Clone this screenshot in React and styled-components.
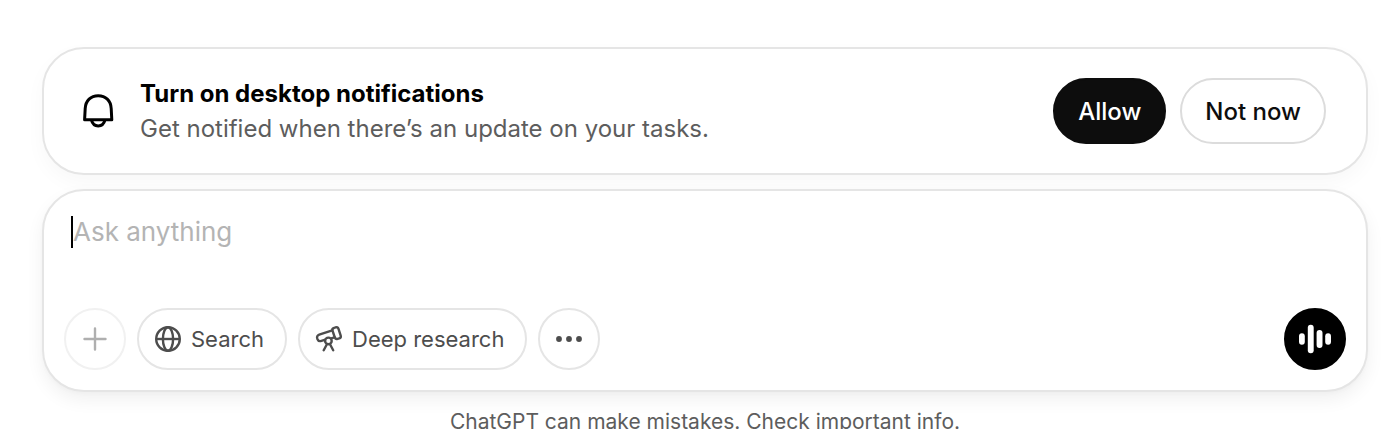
import React, { useState } from "react";
import styled, { createGlobalStyle } from "styled-components";

export default function App() {
  const [prompt, setPrompt] = useState("");

  return (
    <Page>
      <GlobalStyle />
      <Notice>
        <BellIcon />
        <NoticeText>
          <Title>Turn on desktop notifications</Title>
          <Subtitle>Get notified when there’s an update on your tasks.</Subtitle>
        </NoticeText>
        <Actions>
          <ActionButton $primary>Allow</ActionButton>
          <ActionButton>Not now</ActionButton>
        </Actions>
      </Notice>
      <Composer onSubmit={(e) => e.preventDefault()}>
        <Field>
          <Caret />
          <Prompt
            aria-label="Ask anything"
            placeholder="Ask anything"
            rows={1}
            value={prompt}
            onChange={(e) => setPrompt(e.target.value)}
          />
        </Field>
        <Toolbar>
          <RoundButton type="button" aria-label="Add files" $faded>
            <PlusIcon />
          </RoundButton>
          <PillButton type="button">
            <GlobeIcon />
            Search
          </PillButton>
          <PillButton type="button">
            <TelescopeIcon />
            Deep research
          </PillButton>
          <RoundButton type="button" aria-label="More tools">
            <DotsIcon />
          </RoundButton>
          <VoiceButton type="button" aria-label="Use voice mode">
            <VoiceIcon />
          </VoiceButton>
        </Toolbar>
      </Composer>
      <Disclaimer>ChatGPT can make mistakes. Check important info.</Disclaimer>
    </Page>
  );
}

function BellIcon() {
  return (
    <svg width="32" height="36" viewBox="0 0 32 36" fill="none" stroke="#000" strokeWidth="3" strokeLinejoin="round">
      <path d="M2.600 26.800 3.200 15.500C3.600 7.400 8.800 2.700 16.200 2.700s12.600 4.700 13 12.800l.6 11.300Z" />
      <path d="M9.500 27.200c.9 3.700 3.300 5.700 6.700 5.700s5.800-2 6.700-5.700" />
    </svg>
  );
}

function PlusIcon() {
  return (
    <svg width="26" height="26" viewBox="0 0 26 26" fill="none" stroke="#afafaf" strokeWidth="2.4" strokeLinecap="round">
      <path d="M13 2.500v21M2.500 13h21" />
    </svg>
  );
}

function GlobeIcon() {
  return (
    <svg width="28" height="28" viewBox="0 0 28 28" fill="none" stroke="#4d4d4d" strokeWidth="2.4">
      <circle cx="14" cy="14" r="11.800" />
      <ellipse cx="14" cy="14" rx="5.100" ry="11.800" />
      <path d="M2.200 14h23.600" />
    </svg>
  );
}

function TelescopeIcon() {
  return (
    <svg width="28" height="28" viewBox="0 0 28 28" fill="none" stroke="#4d4d4d" strokeWidth="2.4" strokeLinecap="round" strokeLinejoin="round">
      <path d="M18.900 3 20.500 2.400c1.400-.5 2.500 0 3 1.400l2.200 6.800c.4 1.400-.1 2.400-1.400 2.800l-1.700.5c-1.300.4-2.300-.1-2.800-1.400l-2.300-6.800c-.4-1.300.1-2.300 1.400-2.700Z" />
      <path d="M17.300 5.400 4.200 9.700c-1.900.7-2.600 2.100-1.900 3.900l.2.600c.7 1.700 2.100 2.300 3.900 1.700l3.200-1.100M19.800 12.400l-3 .8" />
      <circle cx="13.400" cy="15.900" r="3.300" />
      <path d="m11.900 19.200-3.200 6M15 19.200l3.200 6" />
    </svg>
  );
}

function DotsIcon() {
  return (
    <svg width="28" height="28" viewBox="0 0 28 28" fill="#4d4d4d">
      <circle cx="4" cy="14" r="2.900" />
      <circle cx="14" cy="14" r="2.900" />
      <circle cx="24" cy="14" r="2.900" />
    </svg>
  );
}

function VoiceIcon() {
  return (
    <svg width="32" height="32" viewBox="0 0 32 32" fill="#fff">
      <rect x="0" y="10.300" width="5.800" height="11.400" rx="2.900" />
      <rect x="8.800" y="1.800" width="5.900" height="28.400" rx="2.900" />
      <rect x="17.600" y="7" width="5.900" height="18" rx="2.900" />
      <rect x="26.200" y="10.300" width="5.800" height="11.400" rx="2.900" />
    </svg>
  );
}

const GlobalStyle = createGlobalStyle`
  * {
    box-sizing: border-box;
  }
  body {
    margin: 0;
    background: #fff;
  }
  body, button, textarea {
    font-family: Inter, "Liberation Sans", sans-serif;
  }
`;

const Page = styled.main`
  display: flex;
  flex-direction: column;
  gap: 14px;
  height: 100vh;
  padding: 47px 32px 0 42px;
  overflow: hidden;
`;

const Notice = styled.section`
  display: flex;
  flex-shrink: 0;
  align-items: center;
  gap: 26px;
  padding: 27px 40px 27px 38px;
  border: 2px solid #e5e5e5;
  border-radius: 42px;
  background: #fff;
  box-shadow: 0 8px 20px rgba(0, 0, 0, 0.03);
`;

const NoticeText = styled.div`
  flex: 1;
`;

const Title = styled.h2`
  margin: 0;
  font-size: 24px;
  font-weight: 700;
  line-height: 35px;
  color: #000;
`;

const Subtitle = styled.p`
  margin: 0;
  font-size: 24px;
  line-height: 35px;
  color: #5d5d5d;
`;

const Actions = styled.div`
  display: flex;
  gap: 14px;
`;

const ActionButton = styled.button`
  height: 66px;
  padding: 0 23px;
  border: 2px solid ${(props) => (props.$primary ? "#0d0d0d" : "#dcdcdc")};
  border-radius: 33px;
  background: ${(props) => (props.$primary ? "#0d0d0d" : "#fff")};
  color: ${(props) => (props.$primary ? "#fff" : "#0d0d0d")};
  font-size: 24px;
  font-weight: 500;
  cursor: pointer;
`;

const Composer = styled.form`
  flex-shrink: 0;
  padding: 25px 20px 20px;
  border: 2px solid #e5e5e5;
  border-radius: 42px;
  background: #fff;
  box-shadow: 0 8px 18px rgba(0, 0, 0, 0.06), 0 2px 4px rgba(0, 0, 0, 0.02);
`;

const Field = styled.div`
  display: flex;
  height: 92px;
  padding: 0 7px;
`;

const Caret = styled.span`
  width: 2px;
  height: 32px;
  background: #000;
`;

const Prompt = styled.textarea`
  flex: 1;
  height: 32px;
  padding: 0;
  border: none;
  outline: none;
  resize: none;
  overflow: hidden;
  background: transparent;
  font-size: 26px;
  line-height: 32px;
  color: #0d0d0d;
  caret-color: transparent;
  &::placeholder {
    color: #b4b4b4;
    opacity: 1;
  }
`;

const Toolbar = styled.div`
  display: flex;
  align-items: center;
  gap: 11px;
`;

const ToolButton = styled.button`
  display: flex;
  align-items: center;
  justify-content: center;
  height: 62px;
  padding: 0;
  border: 2px solid ${(props) => (props.$faded ? "#f1f1f1" : "#e5e5e5")};
  border-radius: 31px;
  background: #fff;
  color: #4d4d4d;
  cursor: pointer;
`;

const RoundButton = styled(ToolButton)`
  width: 62px;
`;

const PillButton = styled(ToolButton)`
  gap: 9px;
  padding: 0 21px 0 15px;
  font-size: 22px;
  font-weight: 400;
`;

const VoiceButton = styled(RoundButton)`
  margin-left: auto;
  border-color: #000;
  background: #000;
`;

const Disclaimer = styled.p`
  flex-shrink: 0;
  margin: 0;
  font-size: 21px;
  line-height: 32px;
  text-align: center;
  color: #5d5d5d;
`;
